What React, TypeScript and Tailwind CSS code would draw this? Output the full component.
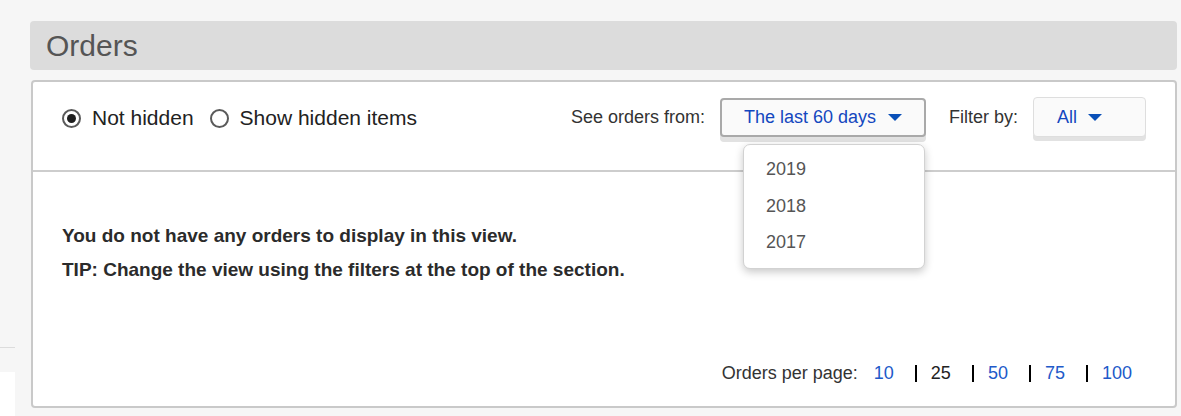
import React from 'react';

const Caret = () => (
  <span className="inline-block w-0 h-0 border-l-[7px] border-r-[7px] border-t-[7px] border-l-transparent border-r-transparent border-t-[#0a50b8]" />
);

const Radio = ({ checked, label }: { checked?: boolean; label: string }) => (
  <label className="flex items-center gap-[11px]">
    <span className="w-[19px] h-[19px] rounded-full border-2 border-[#5a5a5a] bg-white flex items-center justify-center">
      {checked && <span className="w-[9px] h-[9px] rounded-full bg-[#1e1e1e]" />}
    </span>
    <span className="text-[21px] text-[#222]">{label}</span>
  </label>
);

const App = () => {
  const years = ['2019', '2018', '2017'];
  const perPage = [
    { n: '10', active: false },
    { n: '25', active: true },
    { n: '50', active: false },
    { n: '75', active: false },
    { n: '100', active: false },
  ];

  return (
    <div
      className="min-h-[416px] bg-[#f6f6f6] flex overflow-hidden"
      style={{ fontFamily: '"Liberation Sans", Arial, sans-serif' }}
    >
      {/* clipped left column */}
      <div className="w-[15px] shrink-0 pt-[347px]">
        <div className="h-px bg-[#dcdcdc]" />
        <div className="mt-[24px] h-[60px] bg-white" />
      </div>

      <div className="ml-[15px] w-[1147px] pt-[21px]">
        {/* Header */}
        <div className="h-[49px] rounded-[4px] bg-[#dcdcdc] flex items-center pl-[16px]">
          <h1 className="text-[30px] leading-none text-[#555]">Orders</h1>
        </div>

        {/* Panel */}
        <div className="mt-[10px] h-[328px] ml-px border-2 border-[#c9c9c9] rounded-[4px] bg-white flex flex-col">
          <div className="h-[90px] border-b-2 border-[#cdcdcd] px-[29px] pt-[14px] flex items-start justify-between">
            <div className="h-[40px] mt-[2px] flex items-center gap-[16px]">
              <Radio checked label="Not hidden" />
              <Radio label="Show hidden items" />
            </div>

            <div className="h-[40px] mt-[1px] flex items-center text-[18px] text-[#333]">
              <span>See orders from:</span>
              <div className="relative ml-[15px]">
                <button className="w-[206px] h-[39px] border-2 border-[#a9a9a9] rounded-[4px] bg-[#fafafa] shadow-[0_5px_0_0_#e2e2e2] flex items-center pl-[22px] gap-[12px] text-[#1347bf]">
                  <span>The last 60 days</span>
                  <Caret />
                </button>
                <div className="absolute top-[46px] left-[23px] w-[182px] h-[125px] bg-white border border-[#d2d2d2] rounded-[7px] shadow-[0_3px_8px_rgba(0,0,0,0.22)] pt-[7px] pl-[22px] z-10">
                  {years.map((y) => (
                    <div key={y} className="h-[36.5px] flex items-center text-[18px] text-[#555]">
                      {y}
                    </div>
                  ))}
                </div>
              </div>
              <span className="ml-[23px]">Filter by:</span>
              <button className="ml-[15px] w-[113px] h-[40px] border border-[#dedede] rounded-[4px] bg-[#fafafa] shadow-[0_4px_0_0_#e2e2e2] flex items-center pl-[23px] gap-[11px] text-[#1347bf]">
                <span>All</span>
                <Caret />
              </button>
            </div>
          </div>

          <div className="flex-1 flex flex-col px-[29px]">
            <div className="pt-[47px] text-[19px] font-bold leading-[34px] text-[#2b2b2b]">
              <p>You do not have any orders to display in this view.</p>
              <p>TIP: Change the view using the filters at the top of the section.</p>
            </div>
            <div className="mt-auto mb-[21px] h-[24px] flex items-center justify-end pr-[14px] text-[18px]">
              <span className="text-[#333] mr-[16px]">Orders per page:</span>
              {perPage.map((p, i) => (
                <span key={p.n} className="flex items-center">
                  {i > 0 && <span className="w-[2px] h-[17px] bg-black ml-[21px] mr-[14px]" />}
                  <span className={p.active ? 'text-[#222]' : 'text-[#2159c9]'}>{p.n}</span>
                </span>
              ))}
            </div>
          </div>
        </div>
      </div>
    </div>
  );
};

export default App;
